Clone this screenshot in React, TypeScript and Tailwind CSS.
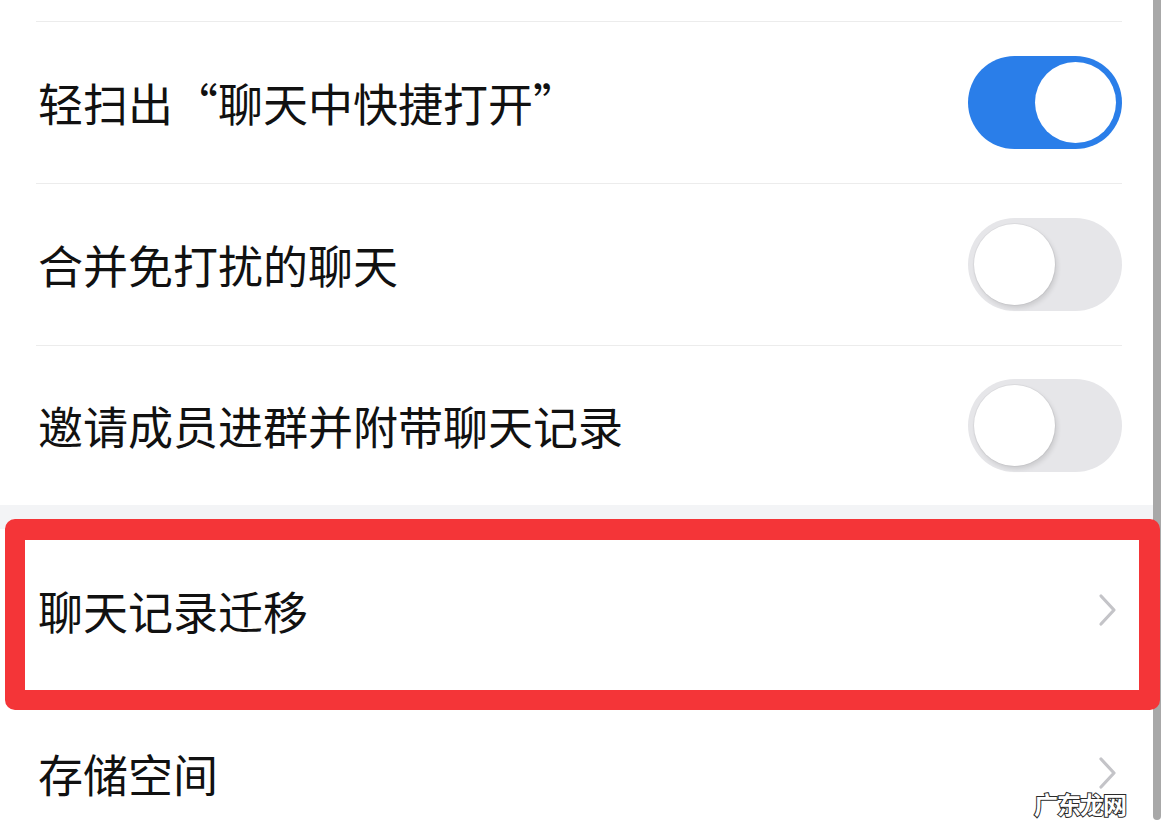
import React from "react";

const font = { fontFamily: '"Noto Sans CJK SC", "Noto Sans", sans-serif' };

function Toggle({ on }: { on: boolean }) {
  if (on) {
    return (
      <div className="relative w-[154px] h-[93px] rounded-full bg-[#2a7ee9] shrink-0">
        <div className="absolute right-[6px] top-[6px] w-[81px] h-[81px] rounded-full bg-white" />
      </div>
    );
  }
  return (
    <div className="relative w-[154px] h-[93px] rounded-full bg-[#e6e6e9] shrink-0">
      <div className="absolute left-[5px] top-[5px] w-[83px] h-[83px] rounded-full bg-[#dcdcdf]" />
      <div className="absolute left-[6px] top-[6px] w-[81px] h-[81px] rounded-full bg-white shadow-[2px_3px_5px_rgba(0,0,0,0.12)]" />
    </div>
  );
}

function Chevron() {
  return (
    <svg width="20" height="34" viewBox="0 0 20 34" className="shrink-0">
      <polyline points="3,3 16,17 3,31" fill="none" stroke="#c4c4c8" strokeWidth="3.2" strokeLinecap="round" strokeLinejoin="round" />
    </svg>
  );
}

function Divider() {
  return <div className="shrink-0 ml-[36px] mr-[31px] h-[1px] bg-[#ececec]" />;
}

function ToggleRow({ label, on, h }: { label: string; on: boolean; h: string }) {
  return (
    <div className={`shrink-0 flex items-center justify-between pl-[38px] pr-[31px] ${h}`}>
      <span className="text-[45px] leading-none text-[#111]" style={font}>{label}</span>
      <Toggle on={on} />
    </div>
  );
}

function LinkRow({ label }: { label: string }) {
  return (
    <div className="shrink-0 flex items-center justify-between pl-[38px] pr-[35px] h-[162px]">
      <span className="text-[45px] leading-none text-[#111]" style={font}>{label}</span>
      <Chevron />
    </div>
  );
}

export default function App() {
  return (
    <div className="relative w-[1170px] h-[834px] overflow-hidden bg-white flex">
      <div className="w-[1153px] shrink-0 flex flex-col">
        <div className="h-[21px] shrink-0" />
        <Divider />
        <ToggleRow label="轻扫出“聊天中快捷打开”" on={true} h="h-[161px]" />
        <Divider />
        <ToggleRow label="合并免打扰的聊天" on={false} h="h-[161px]" />
        <Divider />
        <ToggleRow label="邀请成员进群并附带聊天记录" on={false} h="h-[159px]" />
        <div className="h-[24px] shrink-0 bg-[#f3f4f6]" />
        <LinkRow label="聊天记录迁移" />
        <Divider />
        <LinkRow label="存储空间" />
      </div>
      <div className="w-[8px] shrink-0 h-[820px] bg-[#a8a8a8] rounded-b-full" />

      <div className="absolute left-[5px] top-[519px] w-[1155px] h-[191px] rounded-[10px] border-[#f43538] border-t-[21px] border-l-[20px] border-r-[21px] border-b-[20px]" />

      <div
        className="absolute left-[1034px] top-[792px] text-[24px] font-bold leading-none text-white tracking-[-1px]"
        style={{ ...font, WebkitTextStroke: "2px #2a2a2a", paintOrder: "stroke fill" }}
      >
        广东龙网
      </div>
    </div>
  );
}
